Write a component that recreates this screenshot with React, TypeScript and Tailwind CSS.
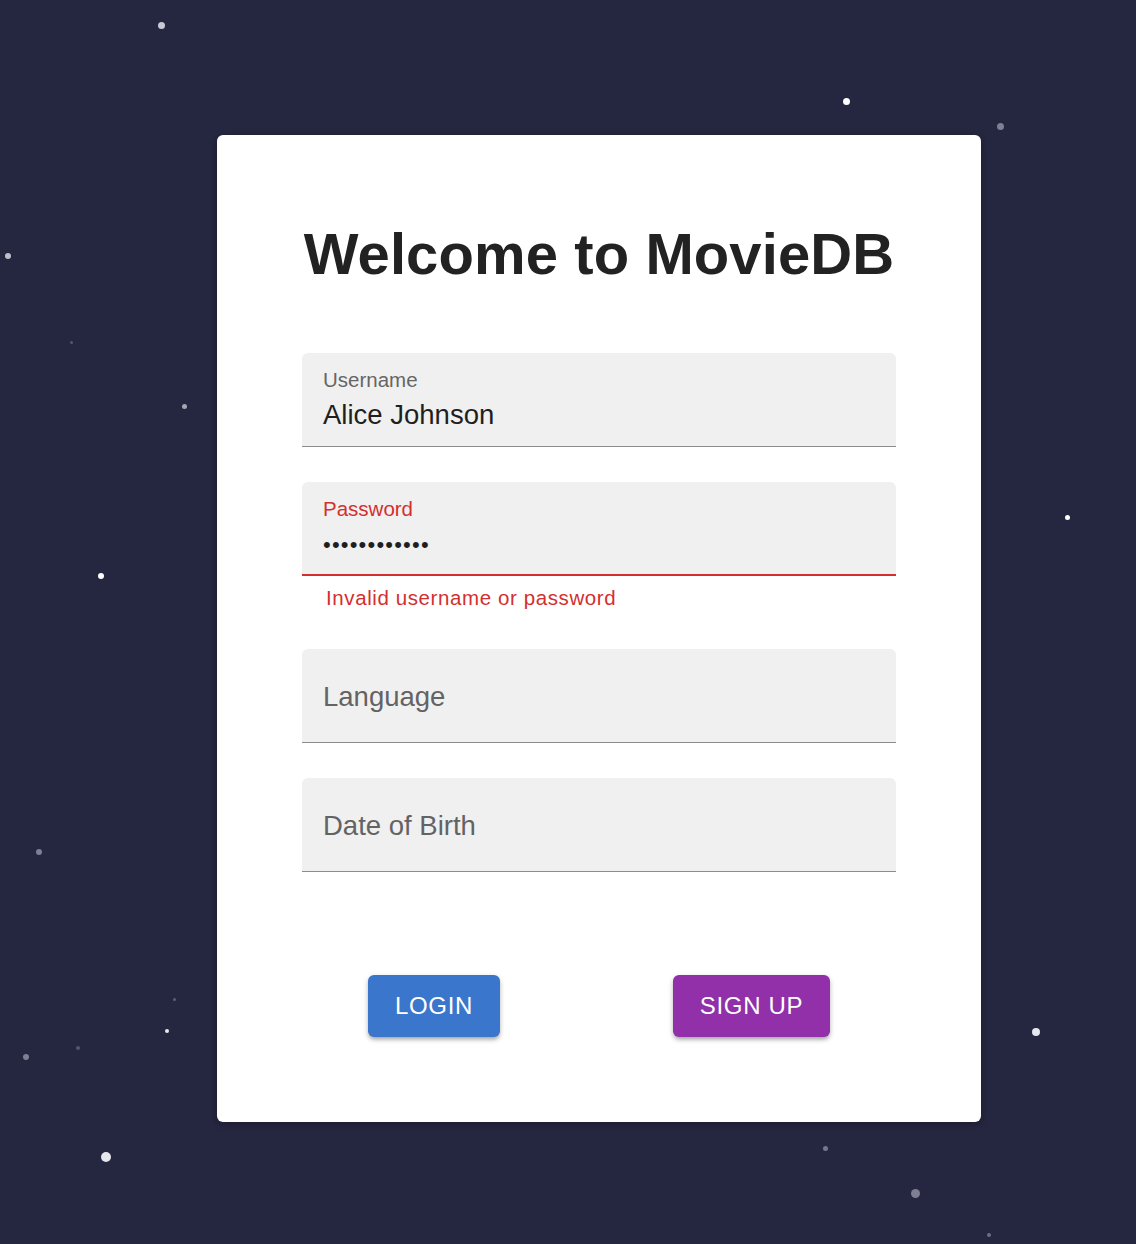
import React from "react";

const stars: { x: number; y: number; s: number; c: string }[] = [
  { x: 161, y: 25, s: 7, c: "rgba(230,230,240,0.85)" },
  { x: 846, y: 101, s: 7, c: "rgba(255,255,255,1)" },
  { x: 1000, y: 126, s: 7, c: "rgba(200,200,215,0.55)" },
  { x: 8, y: 256, s: 6, c: "rgba(230,230,240,0.8)" },
  { x: 71, y: 342, s: 3, c: "rgba(200,200,215,0.3)" },
  { x: 184, y: 406, s: 5, c: "rgba(220,220,230,0.7)" },
  { x: 101, y: 576, s: 6, c: "rgba(255,255,255,1)" },
  { x: 1067, y: 517, s: 5, c: "rgba(255,255,255,1)" },
  { x: 39, y: 852, s: 6, c: "rgba(200,200,215,0.55)" },
  { x: 174, y: 999, s: 3, c: "rgba(200,200,215,0.35)" },
  { x: 167, y: 1031, s: 4, c: "rgba(255,255,255,0.9)" },
  { x: 78, y: 1048, s: 4, c: "rgba(200,200,215,0.3)" },
  { x: 26, y: 1057, s: 6, c: "rgba(200,200,215,0.55)" },
  { x: 106, y: 1157, s: 10, c: "rgba(240,240,248,0.95)" },
  { x: 1036, y: 1032, s: 8, c: "rgba(240,240,248,0.95)" },
  { x: 825, y: 1148, s: 5, c: "rgba(200,200,215,0.5)" },
  { x: 915, y: 1193, s: 9, c: "rgba(200,200,215,0.55)" },
  { x: 989, y: 1235, s: 4, c: "rgba(200,200,215,0.45)" },
];

function Field({
  label,
  value,
  error,
  dots,
}: {
  label: string;
  value?: string;
  error?: boolean;
  dots?: boolean;
}) {
  const border = error ? "border-b-2 border-[#d32f2f]" : "border-b border-[#8c8c8c]";
  if (!value) {
    return (
      <div className={`h-[94px] rounded-t-[6px] bg-[#f0f0f0] ${border} flex items-center pl-[21px]`}>
        <span className="text-[27.5px] text-[#636363] leading-none pt-[3px]">{label}</span>
      </div>
    );
  }
  return (
    <div className={`h-[94px] rounded-t-[6px] bg-[#f0f0f0] ${border} flex flex-col pl-[21px] pt-[12px]`}>
      <span className={`text-[20.5px] leading-[29px] ${error ? "text-[#d32f2f]" : "text-[#666666]"}`}>{label}</span>
      <span
        className={`mt-[1px] leading-[39px] text-[#1f1f1f] ${
          dots ? "text-[22px] tracking-[1.2px] pt-[1px]" : "text-[27.5px]"
        }`}
      >
        {value}
      </span>
    </div>
  );
}

export default function App() {
  return (
    <div
      className="relative w-full h-[1244px] bg-[#25263f] overflow-hidden pt-[135px] pl-[217px]"
      style={{ fontFamily: '"Liberation Sans", Arial, Helvetica, sans-serif' }}
    >
      {stars.map((st, i) => (
        <div
          key={i}
          className="absolute rounded-full"
          style={{
            left: st.x - st.s / 2,
            top: st.y - st.s / 2,
            width: st.s,
            height: st.s,
            background: st.c,
          }}
        />
      ))}
      <div className="relative w-[764px] bg-white rounded-[6px] shadow-[0_2px_6px_rgba(0,0,0,0.25)] px-[85px] pt-[90px] pb-[85px] flex flex-col">
        <h1 className="text-[58px] leading-none font-bold text-[#222222] text-center whitespace-nowrap tracking-[0.1px]">
          Welcome to MovieDB
        </h1>
        <div className="mt-[70px]">
          <Field label="Username" value="Alice Johnson" />
        </div>
        <div className="mt-[35px]">
          <Field label="Password" value="••••••••••••" error dots />
        </div>
        <div className="mt-[5px] pl-[24px] text-[20.5px] leading-[34px] tracking-[0.6px] text-[#d32f2f]">
          Invalid username or password
        </div>
        <div className="mt-[34px]">
          <Field label="Language" />
        </div>
        <div className="mt-[35px]">
          <Field label="Date of Birth" />
        </div>
        <div className="mt-[103px] flex justify-between px-[66px]">
          <button className="h-[62px] w-[132px] rounded-[6px] bg-[#3a76cc] text-white text-[24px] tracking-[0.7px] shadow-[0_3px_4px_-1px_rgba(0,0,0,0.3),0_2px_6px_rgba(0,0,0,0.14)]">
            LOGIN
          </button>
          <button className="h-[62px] w-[157px] rounded-[6px] bg-[#9130a8] text-white text-[24px] tracking-[0.7px] shadow-[0_3px_4px_-1px_rgba(0,0,0,0.3),0_2px_6px_rgba(0,0,0,0.14)]">
            SIGN UP
          </button>
        </div>
      </div>
    </div>
  );
}
